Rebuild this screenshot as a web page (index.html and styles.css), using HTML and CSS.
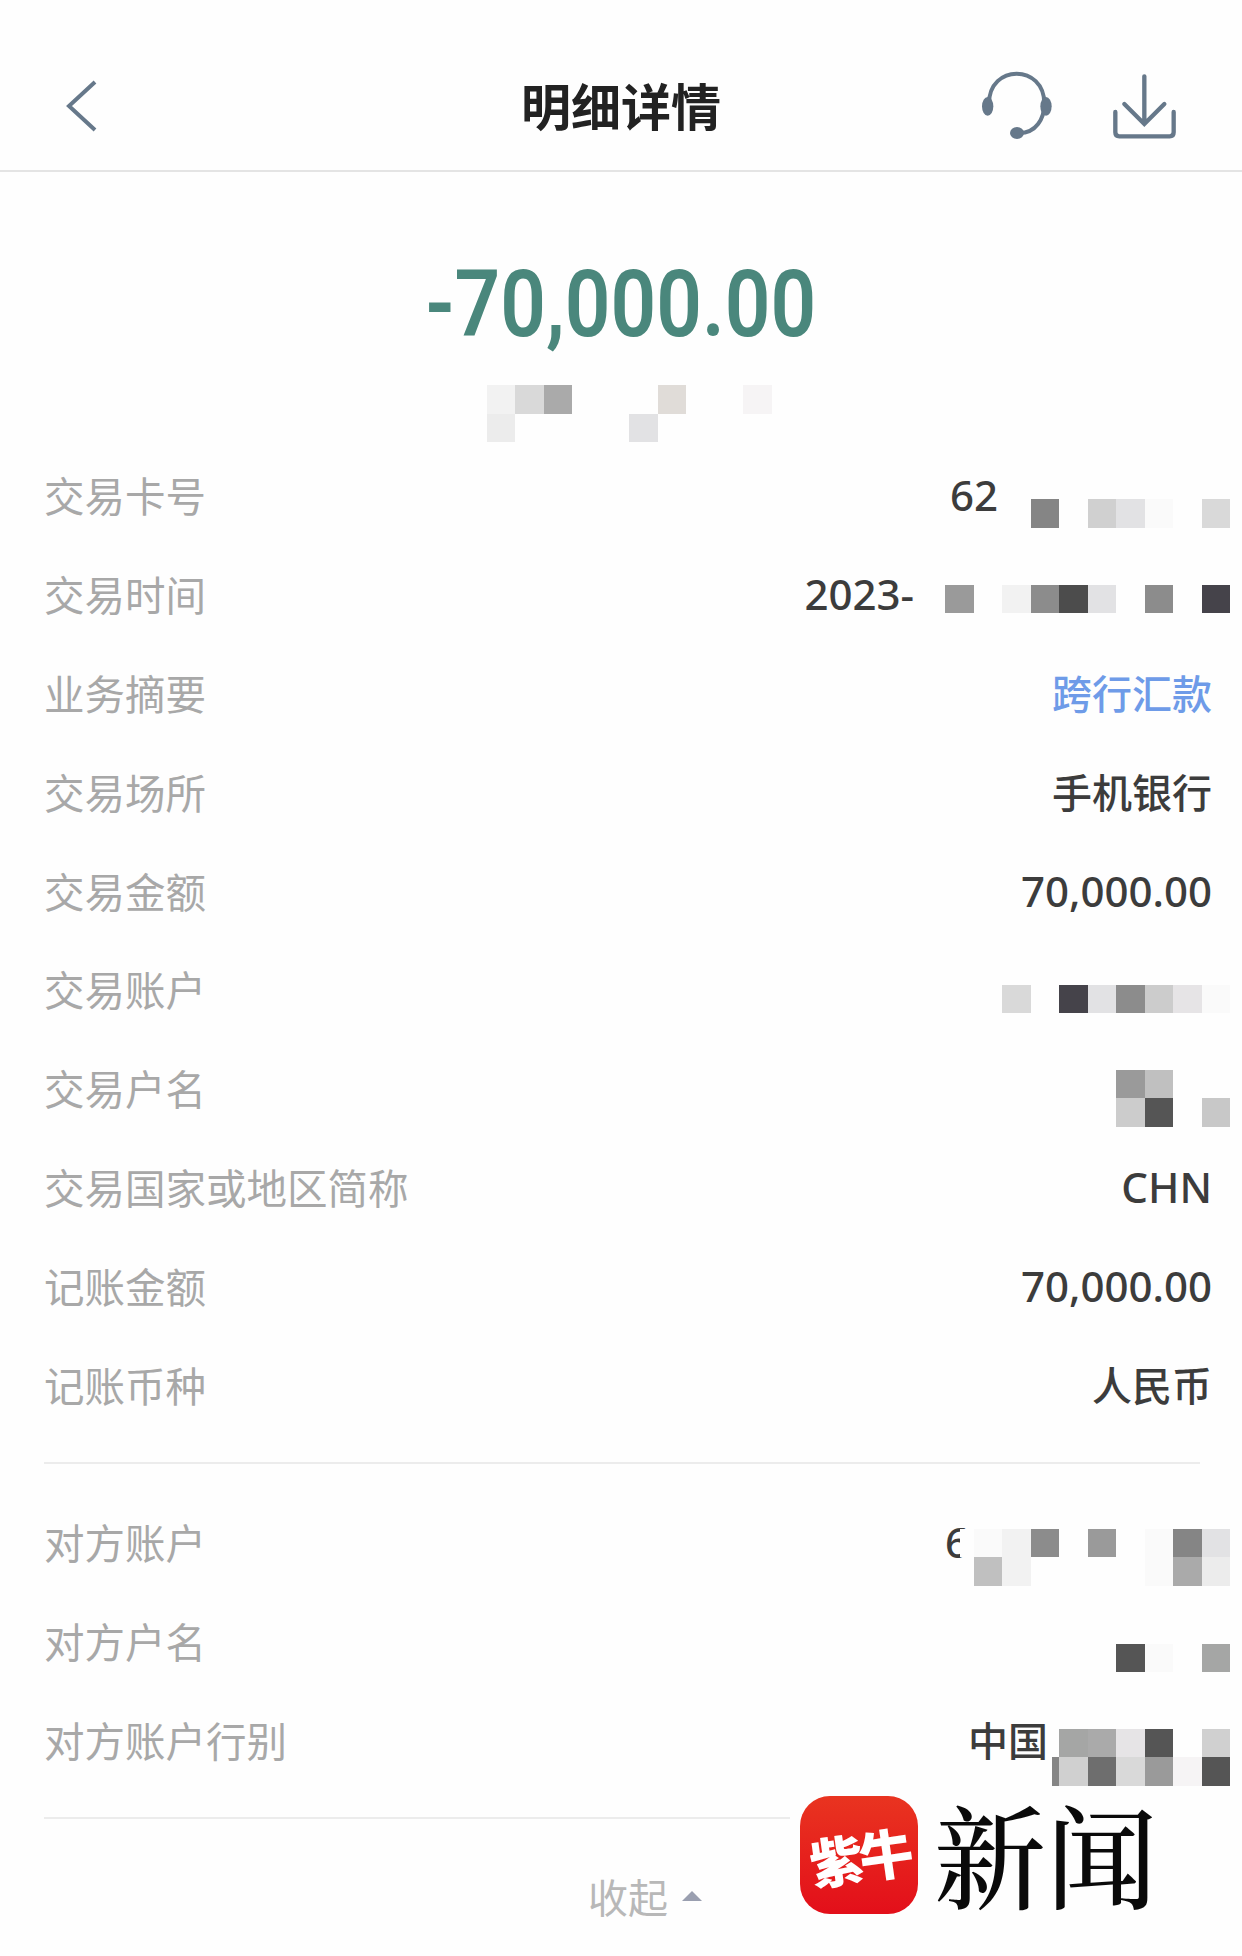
FILE: index.html
```html
<!DOCTYPE html>
<html lang="zh-CN">
<head>
    <meta charset="UTF-8">
    <meta name="viewport" content="width=device-width, initial-scale=1.0">
    <title>明细详情</title>
    <link rel="stylesheet" href="styles.css">
</head>
<body>
    <header class="topbar">
        <div class="topbar-left">
            <svg class="icon-back" viewBox="0 0 31 52"><path d="M29 2 L3 26 L29 50"/></svg>
        </div>
        <h1>明细详情</h1>
        <div class="topbar-right">
            <svg class="icon-headset" viewBox="57 62 222 210">
                <path d="M84 160 C84 40 250 40 250 160 C250 205 225 248 175 248"/>
                <ellipse class="solid" cx="80" cy="168" rx="17" ry="28"/>
                <ellipse class="solid" cx="255" cy="168" rx="17" ry="28"/>
                <ellipse class="solid" cx="168" cy="248" rx="21" ry="18"/>
            </svg>
            <svg class="icon-download" viewBox="450 68 198 204">
                <path d="M550 75 V215 M490 158 L550 218 L610 158"/>
                <path d="M463 182 V243 Q463 255 475 255 H626 Q638 255 638 243 V182"/>
            </svg>
        </div>
    </header>

    <section class="hero">
        <div class="amount"><span>-70,000.00</span></div>
        <div class="mosaic-flow cols-10">
            <i class="gf2"></i><i class="gd9"></i><i class="gaa"></i><i></i><i></i><i></i><i class="gdd"></i><i></i><i></i><i class="gf6"></i>
            <i class="gec"></i><i></i><i></i><i></i><i></i><i class="ge2"></i><i></i><i></i><i></i><i></i>
        </div>
    </section>

    <section class="details">
        <div class="row">
            <span class="label">交易卡号</span>
            <span class="value gap-card">62</span>
            <div class="mosaic cols-7 at-card">
                <i class="g85"></i><i></i><i class="gd0"></i><i class="ge2"></i><i class="gfa"></i><i></i><i class="gd9"></i>
            </div>
        </div>
        <div class="row">
            <span class="label">交易时间</span>
            <span class="value gap-time">2023-</span>
            <div class="mosaic cols-10 at-time">
                <i class="g9a"></i><i></i><i class="gf2"></i><i class="g8c"></i><i class="g4c"></i><i class="ge2"></i><i></i><i class="g8c"></i><i></i><i class="g44"></i>
            </div>
        </div>
        <div class="row">
            <span class="label">业务摘要</span>
            <span class="value cjk link">跨行汇款</span>
        </div>
        <div class="row">
            <span class="label">交易场所</span>
            <span class="value cjk">手机银行</span>
        </div>
        <div class="row">
            <span class="label">交易金额</span>
            <span class="value">70,000.00</span>
        </div>
        <div class="row">
            <span class="label">交易账户</span>
            <div class="mosaic cols-8 at-account">
                <i class="gd9"></i><i></i><i class="g44"></i><i class="ge2"></i><i class="g8c"></i><i class="gcc"></i><i class="ge6"></i><i class="gfa"></i>
            </div>
        </div>
        <div class="row">
            <span class="label">交易户名</span>
            <div class="mosaic cols-4 at-name">
                <i class="g9a"></i><i class="gc0"></i><i></i><i></i>
                <i class="gcc"></i><i class="g55"></i><i></i><i class="gc8"></i>
            </div>
        </div>
        <div class="row">
            <span class="label">交易国家或地区简称</span>
            <span class="value">CHN</span>
        </div>
        <div class="row">
            <span class="label">记账金额</span>
            <span class="value">70,000.00</span>
        </div>
        <div class="row">
            <span class="label">记账币种</span>
            <span class="value cjk">人民币</span>
        </div>
    </section>

    <hr class="divider first">

    <section class="details">
        <div class="row">
            <span class="label">对方账户</span>
            <span class="value gap-peer">6</span>
            <div class="mosaic cols-10 at-peer">
                <i class="blank sliver"></i><i class="gfa"></i><i class="gf2"></i><i class="g8c"></i><i></i><i class="g9a"></i><i></i><i class="gfa"></i><i class="g85"></i><i class="ge2"></i>
                <i></i><i class="gc0"></i><i class="gf2"></i><i></i><i></i><i></i><i></i><i class="gfa"></i><i class="gaa"></i><i class="gec"></i>
            </div>
        </div>
        <div class="row">
            <span class="label">对方户名</span>
            <div class="mosaic cols-4 at-peername">
                <i class="g55"></i><i class="gfa"></i><i></i><i class="ga5"></i>
            </div>
        </div>
        <div class="row">
            <span class="label">对方账户行别</span>
            <span class="value cjk gap-bank">中国</span>
            <div class="mosaic cols-7 at-bank">
                <i></i><i class="ga5"></i><i class="gaa"></i><i class="ge6"></i><i class="g55"></i><i></i><i class="gd0"></i>
                <i class="g85 sliver"></i><i class="gd0"></i><i class="g6e"></i><i class="gd9"></i><i class="g9a"></i><i class="gf6"></i><i class="g55"></i>
            </div>
        </div>
    </section>

    <hr class="divider second">

    <div class="collapse">
        <span>收起</span>
        <i class="caret"></i>
    </div>

    <!-- watermark sits over the page -->
    <div class="watermark">
        <div class="wm-logo"><span>紫牛</span></div>
        <div class="wm-name">新闻</div>
    </div>
</body>
</html>
```

FILE: styles.css
```css
* {
    box-sizing: border-box;
}

body {
    margin: 0;
    position: relative;
    height: 1956px;
    overflow: hidden;
    background-color: #fefefe;
    font-family: "Noto Sans", "Noto Sans CJK SC", sans-serif;
}

.topbar {
    height: 172px;
    padding-top: 40px;
    padding-bottom: 2px;
    display: grid;
    grid-template-columns: 1fr auto 1fr;
    align-items: center;
    border-bottom: 2px solid #e4e4e4;
}

.topbar h1 {
    margin: 0;
    font-size: 50px;
    font-weight: 700;
    color: #222;
    font-family: "Noto Sans CJK SC", sans-serif;
    line-height: 60px;
}

.topbar-left {
    padding: 3px 0 0 66px;
    display: flex;
}

.topbar-right {
    padding: 3px 65px 0 0;
    display: flex;
    justify-content: flex-end;
    align-items: center;
    gap: 57px;
}

.topbar svg {
    fill: none;
    stroke: #66788a;
}

.icon-back {
    width: 31px;
    height: 52px;
    stroke-width: 4;
}

.icon-headset {
    width: 74px;
    height: 70px;
    stroke-width: 12;
}

.icon-headset .solid {
    fill: #66788a;
    stroke: none;
}

.icon-download {
    width: 66px;
    height: 68px;
    margin-top: 4px;
    stroke-width: 13;
    stroke-linecap: round;
}

.hero {
    padding-top: 83px;
    margin-bottom: 6px;
}

.amount {
    text-align: center;
    height: 100px;
    line-height: 100px;
    font-family: Roboto, sans-serif;
    font-size: 92px;
    font-weight: 600;
    color: #4a877c;
}

.amount span {
    display: inline-block;
    transform: scaleX(0.87);
}

.row {
    position: relative;
    height: 98.8px;
    padding: 0 30px 5px 44px;
    display: flex;
    justify-content: space-between;
    align-items: center;
}

.label {
    font-family: "Noto Sans CJK SC", sans-serif;
    font-size: 40.5px;
    color: #a8a8a8;
}

.value {
    font-size: 42px;
    font-weight: 500;
    color: #3c3c3c;
}

.cjk {
    font-size: 40px;
}

.link {
    color: #6e9be8;
}

.gap-card {
    margin-right: 214px;
}

.gap-time {
    margin-right: 298px;
}

.gap-peer {
    margin-right: 243px;
}

.gap-bank {
    margin-right: 164px;
}

/* pixelated blocks covering private data */
.mosaic,
.mosaic-flow {
    display: grid;
    grid-auto-rows: 28.5px;
}

.mosaic {
    position: absolute;
    right: 12px;
}

.mosaic-flow {
    width: 285px;
    margin: 30px auto 0;
    transform: translateX(8px);
}

.mosaic i,
.mosaic-flow i {
    display: block;
}

.cols-4 { grid-template-columns: repeat(4, 28.5px); }
.cols-7 { grid-template-columns: repeat(7, 28.5px); }
.cols-8 { grid-template-columns: repeat(8, 28.5px); }
.cols-10 { grid-template-columns: repeat(10, 28.5px); }

.at-card { top: 51px; }
.at-time { top: 38px; }
.at-account { top: 43px; }
.at-name { top: 29px; }
.at-peer { top: 34px; }
.at-peername { top: 50px; }
.at-bank { top: 36px; }

.sliver {
    width: 7px;
    justify-self: end;
}

.blank {
    width: 14px;
    background: #fefefe;
}

.g44 { background: #45434a; }
.g4c { background: #4c4c4c; }
.g55 { background: #555; }
.g6e { background: #6e6e6e; }
.g85 { background: #858585; }
.g8c { background: #8c8c8c; }
.g9a { background: #9a9a9a; }
.ga5 { background: #a5a6a5; }
.gaa { background: #aaa; }
.gc0 { background: #c0c0c0; }
.gc8 { background: #c8c8c8; }
.gcc { background: #cccccc; }
.gd0 { background: #d0d0d0; }
.gd9 { background: #d9d9d9; }
.gdd { background: #e0dcd8; }
.ge2 { background: #e2e2e4; }
.ge6 { background: #e6e4e6; }
.gec { background: #ececec; }
.gf2 { background: #f2f2f2; }
.gf6 { background: #f6f4f5; }
.gfa { background: #fafafa; }

.divider {
    margin: 0 42px 0 44px;
    height: 2px;
    border: none;
    background-color: #ececec;
}

.divider.first {
    margin-top: 26px;
    margin-bottom: 31px;
}

.divider.second {
    margin-top: 26px;
}

.collapse {
    margin-top: 48px;
    display: flex;
    justify-content: center;
    align-items: center;
    gap: 14px;
    padding-left: 48px;
    font-family: "Noto Sans CJK SC", sans-serif;
    font-size: 40px;
    color: #b8b8b8;
}

.caret {
    width: 0;
    height: 0;
    border-left: 10px solid transparent;
    border-right: 10px solid transparent;
    border-bottom: 10px solid #9a9fb0;
}

.watermark {
    position: absolute;
    left: 790px;
    top: 1790px;
    width: 452px;
    height: 130px;
    padding: 6px 0 0 10px;
    display: flex;
    gap: 16px;
    background-color: #fefefe;
}

.wm-logo {
    width: 118px;
    height: 118px;
    border-radius: 30px;
    background: linear-gradient(#e93420, #e30f1a);
    color: #fff;
    display: flex;
    justify-content: center;
    align-items: center;
    font-family: "Noto Sans CJK SC", sans-serif;
    font-size: 54px;
    font-weight: 900;
    letter-spacing: -4px;
}

.wm-logo span {
    display: inline-block;
    transform: rotate(-8deg);
}

.wm-name {
    font-family: "Noto Serif CJK SC", "Noto Sans CJK SC", serif;
    font-size: 112px;
    line-height: 114px;
    font-weight: 500;
    color: #0a0a0a;
}
```
